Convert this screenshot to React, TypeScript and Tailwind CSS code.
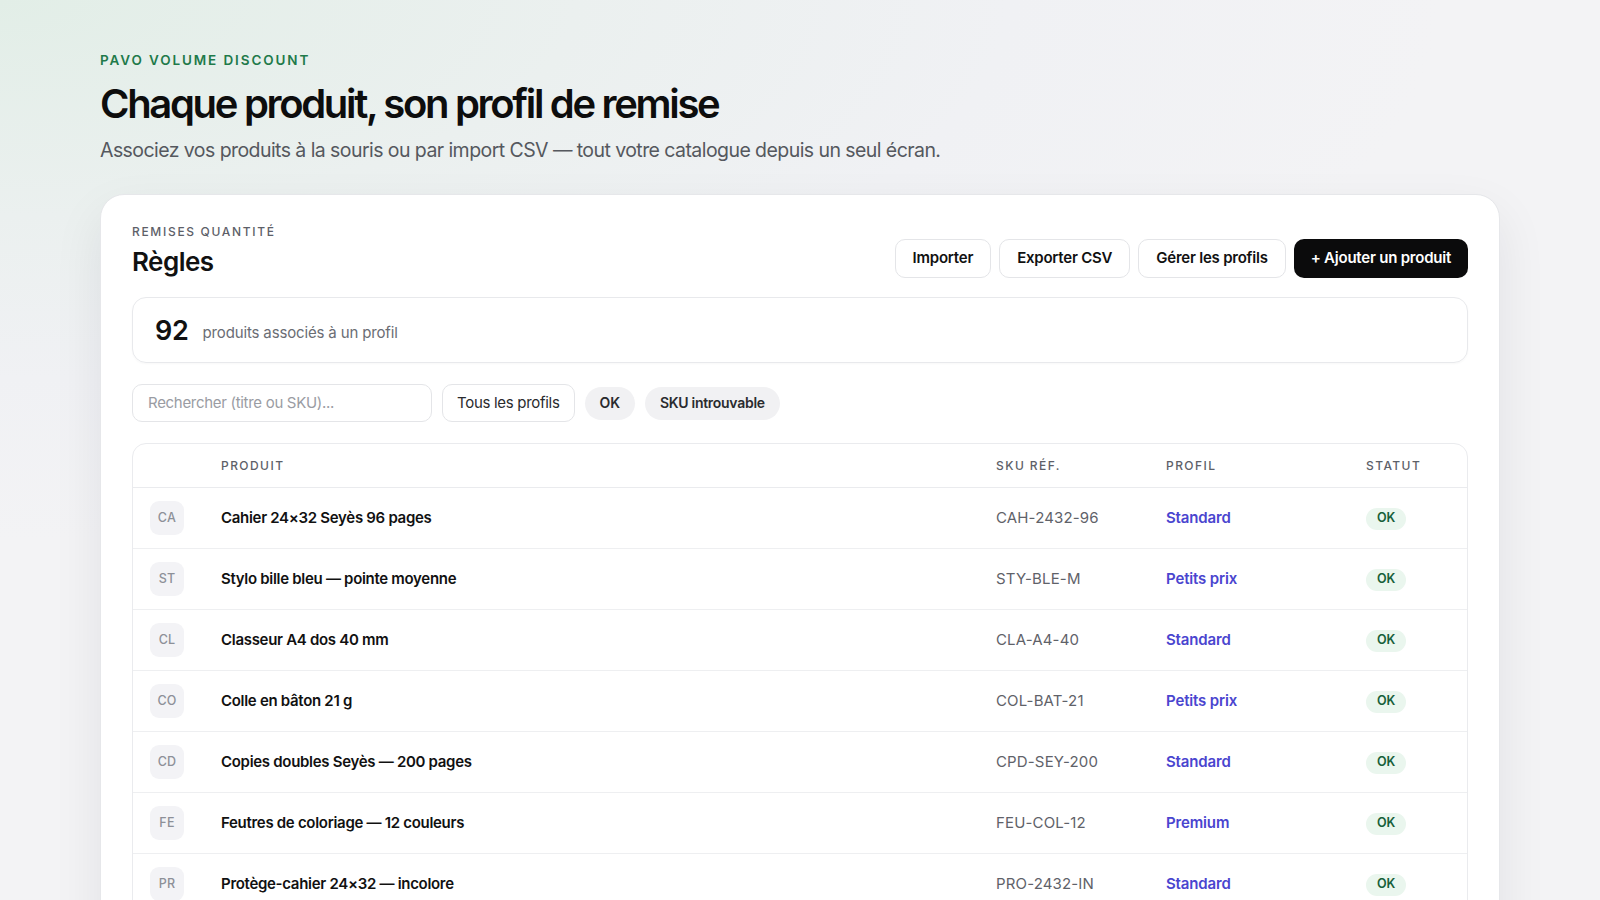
import React from "react";

type Row = { code: string; name: string; sku: string; profile: string };

const rows: Row[] = [
  { code: "CA", name: "Cahier 24×32 Seyès 96 pages", sku: "CAH-2432-96", profile: "Standard" },
  { code: "ST", name: "Stylo bille bleu — pointe moyenne", sku: "STY-BLE-M", profile: "Petits prix" },
  { code: "CL", name: "Classeur A4 dos 40 mm", sku: "CLA-A4-40", profile: "Standard" },
  { code: "CO", name: "Colle en bâton 21 g", sku: "COL-BAT-21", profile: "Petits prix" },
  { code: "CD", name: "Copies doubles Seyès — 200 pages", sku: "CPD-SEY-200", profile: "Standard" },
  { code: "FE", name: "Feutres de coloriage — 12 couleurs", sku: "FEU-COL-12", profile: "Premium" },
  { code: "PR", name: "Protège-cahier 24×32 — incolore", sku: "PRO-2432-IN", profile: "Standard" },
  { code: "GO", name: "Gomme blanche plastique", sku: "GOM-BLA-01", profile: "Petits prix" },
];

export default function App() {
  return (
    <div
      className="h-screen overflow-hidden bg-[radial-gradient(ellipse_90%_60%_at_0%_0%,#e2eee7_0%,#ebf0ef_40%,#f0f1f4_70%,#f3f3f5_100%)] text-[#111111]"
      style={{ fontFamily: "Inter, 'Noto Sans', 'Liberation Sans', sans-serif" }}
    >
      <div className="mx-auto max-w-[1400px] pt-[52px]">
        <div className="text-[13.5px] leading-4 font-semibold tracking-[0.14em] text-[#1f7a4a]">
          PAVO VOLUME DISCOUNT
        </div>
        <h1 className="mt-3 text-[40px] leading-[48px] font-semibold tracking-[-0.058em] text-[#0d0d0d]">
          Chaque produit, son profil de remise
        </h1>
        <p className="mt-2 text-[19.5px] leading-7 text-[#55585e] tracking-[-0.029em]">
          Associez vos produits à la souris ou par import CSV — tout votre catalogue depuis un seul écran.
        </p>

        <div className="mt-[30px] rounded-[24px] border border-[#e6e7ea] bg-white px-[31px] pt-[29px] pb-8 shadow-[0_20px_50px_rgba(20,30,40,0.08)]">
          <div className="flex items-end justify-between">
            <div>
              <div className="text-[12px] leading-4 font-medium tracking-[0.14em] text-[#5d6068]">
                REMISES QUANTITÉ
              </div>
              <div className="mt-[6px] text-[26px] leading-8 font-semibold tracking-[-0.02em]">Règles</div>
            </div>
            <div className="flex items-center gap-2">
              <button className="h-[39px] rounded-[10px] border border-[#e4e5e8] bg-white px-[17px] text-[15px] font-semibold tracking-[-0.015em] text-[#111]">
                Importer
              </button>
              <button className="h-[39px] rounded-[10px] border border-[#e4e5e8] bg-white px-[17px] text-[15px] font-semibold tracking-[-0.015em] text-[#111]">
                Exporter CSV
              </button>
              <button className="h-[39px] rounded-[10px] border border-[#e4e5e8] bg-white px-[17px] text-[15px] font-semibold tracking-[-0.015em] text-[#111]">
                Gérer les profils
              </button>
              <button className="h-[39px] rounded-[10px] bg-[#0b0b0c] px-[17px] text-[15px] font-semibold tracking-[-0.015em] text-white">
                + Ajouter un produit
              </button>
            </div>
          </div>

          <div className="mt-[19px] flex h-[66px] items-center gap-[14px] rounded-[14px] border border-[#e8e9ec] px-[22px] pt-[3px] shadow-[0_1px_2px_rgba(0,0,0,0.03)]">
            <span className="text-[27px] font-semibold tracking-[-0.01em]">92</span>
            <span className="mt-1 text-[15px] tracking-[-0.01em] text-[#6a6d74]">produits associés à un profil</span>
          </div>

          <div className="mt-[21px] flex items-center gap-[10px]">
            <div className="flex h-[38px] w-[300px] items-center rounded-[10px] border border-[#e4e5e8] px-[15px] text-[15px] tracking-[-0.02em] text-[#9a9ca3]">
              Rechercher (titre ou SKU)...
            </div>
            <div className="flex h-[38px] items-center rounded-[10px] border border-[#e4e5e8] px-[14px] text-[15px] tracking-[-0.02em] text-[#2a2b2e]">
              Tous les profils
            </div>
            <div className="flex h-[33px] items-center rounded-full bg-[#f1f1f3] px-[15px] pb-px text-[14px] font-semibold tracking-[-0.01em] text-[#2a2b2e]">
              OK
            </div>
            <div className="flex h-[33px] items-center rounded-full bg-[#f1f1f3] px-[15px] pb-px text-[14px] font-semibold tracking-[-0.02em] text-[#2a2b2e]">
              SKU introuvable
            </div>
          </div>

          <div className="mt-[21px] overflow-hidden rounded-[14px] border border-[#eaebee]">
            <div className="grid h-[44px] grid-cols-[88px_1fr_170px_200px_101px] items-center border-b border-[#eaebee] text-[12px] font-medium tracking-[0.12em] text-[#5d6068]">
              <div />
              <div>PRODUIT</div>
              <div>SKU RÉF.</div>
              <div>PROFIL</div>
              <div>STATUT</div>
            </div>
            {rows.map((r) => (
              <div
                key={r.code}
                className="grid h-[61px] grid-cols-[88px_1fr_170px_200px_101px] items-center border-b border-[#eeeff1] text-[15px]"
              >
                <div className="pl-[17px]">
                  <div className="flex h-[34px] w-[34px] items-center justify-center rounded-[9px] bg-[#f3f3f6] text-[12.5px] font-medium tracking-[0.02em] text-[#8d9098]">
                    {r.code}
                  </div>
                </div>
                <div className="font-semibold tracking-[-0.02em] text-[#111]">{r.name}</div>
                <div className="text-[#5f6269] tracking-[0.01em]">{r.sku}</div>
                <div className="font-semibold tracking-[-0.01em] text-[#4a45cf]">{r.profile}</div>
                <div>
                  <span className="inline-flex h-[22px] items-center rounded-full bg-[#eaf6ee] px-[11px] text-[12.5px] font-semibold text-[#17603a]">
                    OK
                  </span>
                </div>
              </div>
            ))}
          </div>
        </div>
      </div>
    </div>
  );
}
